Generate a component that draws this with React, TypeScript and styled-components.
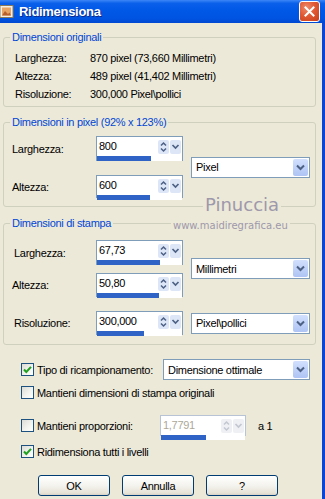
import styled, { createGlobalStyle } from "styled-components";

const GlobalStyle = createGlobalStyle`
  html, body {
    margin: 0;
    padding: 0;
    background: #ece9d8;
  }
  body {
    font-family: "Liberation Sans", Tahoma, Arial, sans-serif;
    font-size: 11px;
    letter-spacing: -0.3px;
    color: #000;
  }
`;

const Window = styled.div`
  width: 325px;
  height: 499px;
  display: flex;
  flex-direction: column;
  background: #ece9d8;
  overflow: hidden;
`;

const TitleBar = styled.div`
  height: 23px;
  flex-shrink: 0;
  display: flex;
  align-items: center;
  padding-right: 5px;
  background: linear-gradient(
    to bottom,
    #3c86f6 0%,
    #0b60ea 14%,
    #0058e6 45%,
    #0054e2 80%,
    #0048d2 100%
  );
`;

const Title = styled.span`
  font-weight: bold;
  font-size: 13px;
  color: #fff;
  margin-left: 5px;
  text-shadow: 1px 1px 0 #0c2a8c;
`;

const CloseButton = styled.div`
  margin-left: auto;
  width: 19px;
  height: 19px;
  border: 1px solid #fff;
  border-radius: 3px;
  background: radial-gradient(circle at 35% 30%, #ef8a6c 0%, #e05a35 45%, #c93e18 100%);
  display: flex;
  align-items: center;
  justify-content: center;
`;

const Body = styled.div`
  position: relative;
  flex: 1;
  display: flex;
  flex-direction: column;
  border-right: 3px solid #0a45d3;
  padding-top: 8px;
`;

const Group = styled.fieldset<{ $top?: number; $pt?: number; $pb?: number }>`
  margin: ${(p) => p.$top ?? 0}px 6px 0 3px;
  padding: ${(p) => p.$pt ?? 0}px 4px ${(p) => p.$pb ?? 0}px 8px;
  border: 1px solid #d0d0bf;
  border-radius: 3px;
  min-width: 0;
`;

const Legend = styled.legend`
  color: #0046d5;
  padding: 0 2px;
  margin-left: -2px;
  line-height: 13px;
`;

const InfoGrid = styled.div`
  display: grid;
  grid-template-columns: 75px 1fr;
  grid-auto-rows: 18px;
  align-items: center;
  padding-left: 3px;
`;

const PairGrid = styled.div<{ $gap: number }>`
  display: grid;
  grid-template-columns: 76px 87px 119px;
  column-gap: 8px;
  row-gap: ${(p) => p.$gap}px;
  align-items: center;
`;

const SingleRow = styled.div<{ $top: number }>`
  display: grid;
  grid-template-columns: 76px 87px 119px;
  column-gap: 8px;
  align-items: center;
  margin-top: ${(p) => p.$top}px;
`;

const FieldLabel = styled.span<{ $indent?: number }>`
  padding-left: ${(p) => p.$indent ?? 0}px;
  white-space: nowrap;
`;

const SpanCell = styled.div`
  grid-column: 3;
  grid-row: 1 / span 2;
`;

const SpinFrame = styled.div<{ $h: number; $w: number; $disabled?: boolean }>`
  box-sizing: border-box;
  width: ${(p) => p.$w}px;
  height: ${(p) => p.$h}px;
  border: 1px solid ${(p) => (p.$disabled ? "#b8c4d6" : "#7f9db9")};
  background: #fff;
  display: grid;
  grid-template-columns: 1fr auto;
  grid-template-rows: 1fr 5px;
  color: ${(p) => (p.$disabled ? "#aca899" : "#000")};
`;

const SpinText = styled.span`
  padding: 3px 0 0 2px;
  line-height: 13px;
`;

const SpinArrows = styled.div`
  padding: 3px 1px 0 0;
`;

const BarTrack = styled.div`
  grid-column: 1 / span 2;
  background: #fff;
`;

const BarFill = styled.div`
  height: 100%;
  background: #3063c6;
`;

const Select = styled.div<{ $w: number }>`
  box-sizing: border-box;
  width: ${(p) => p.$w}px;
  height: 21px;
  border: 1px solid #7f9db9;
  background: #fff;
  display: flex;
  align-items: center;
  padding-left: 4px;
`;

const ComboButton = styled.div`
  margin-left: auto;
  margin-right: 1px;
  width: 15px;
  height: 17px;
  border-radius: 2px;
  background: linear-gradient(to bottom, #d2e0fd 0%, #bccff8 60%, #afc4f4 100%);
  display: flex;
  align-items: center;
  justify-content: center;
`;

const Options = styled.div`
  display: flex;
  flex-direction: column;
  padding: 0 12px 0 21px;
`;

const OptionRow = styled.div<{ $top: number; $h: number }>`
  display: flex;
  align-items: center;
  height: ${(p) => p.$h}px;
  margin-top: ${(p) => p.$top}px;
`;

const Box = styled.div`
  box-sizing: border-box;
  width: 13px;
  height: 13px;
  border: 1px solid #1c5180;
  background: linear-gradient(135deg, #dcdcd7 0%, #f4f4f0 60%, #ffffff 100%);
  margin-right: 3px;
  flex-shrink: 0;
  display: flex;
  align-items: center;
  justify-content: center;
`;

const OptionLabel = styled.span<{ $w?: number }>`
  white-space: nowrap;
  width: ${(p) => (p.$w ? `${p.$w}px` : "auto")};
`;

const RightCell = styled.div`
  margin-left: auto;
`;

const Suffix = styled.span`
  margin-left: 12px;
`;

const ButtonRow = styled.div`
  display: flex;
  gap: 12px;
  padding-left: 38px;
  margin-top: 17px;
`;

const Button = styled.div`
  box-sizing: border-box;
  width: 72px;
  height: 21px;
  border: 1px solid #003c74;
  border-radius: 3px;
  background: linear-gradient(to bottom, #ffffff 0%, #f4f3ee 50%, #e6e3d6 90%, #d6d0c5 100%);
  display: flex;
  align-items: center;
  justify-content: center;
`;

const Watermark = styled.span<{ $top: number; $left: number; $size: number }>`
  position: absolute;
  top: ${(p) => p.$top}px;
  left: ${(p) => p.$left}px;
  font-family: "DejaVu Sans", sans-serif;
  font-size: ${(p) => p.$size}px;
  letter-spacing: 0;
  color: #9e98ab;
  background: #ece9d8;
  padding: 0 2px;
  white-space: nowrap;
`;

const WindowIcon = () => (
  <svg width="14" height="13" viewBox="0 0 14 13">
    <rect x="0" y="0.5" width="13" height="12" fill="#f4efe2" stroke="#8a7a5c" />
    <rect x="2" y="2.5" width="9" height="8" fill="#e8a463" />
    <path d="M2 10.5 L5 6 L8 9 L9.5 7.5 L11 10.5 Z" fill="#b8602c" />
  </svg>
);

const CloseGlyph = () => (
  <svg width="11" height="11" viewBox="0 0 11 11">
    <path d="M1.5 1.5 L9.5 9.5 M9.5 1.5 L1.5 9.5" stroke="#fff" strokeWidth="2" strokeLinecap="square" />
  </svg>
);

const SpinGlyph = ({ disabled }: { disabled?: boolean }) => {
  const bg = disabled ? "#eef0f4" : "#dde6f7";
  const ink = disabled ? "#c3c7d0" : "#4d6185";
  return (
    <svg width="23" height="14" viewBox="0 0 23 14">
      <rect x="0" y="0" width="11" height="14" rx="2" fill={bg} />
      <rect x="12" y="0" width="11" height="14" rx="2" fill={bg} />
      <path d="M3 5.5 L5.5 3 L8 5.5 M3 8.5 L5.5 11 L8 8.5" stroke={ink} strokeWidth="1.5" fill="none" />
      <path d="M14.5 5 L17.5 8 L20.5 5" stroke={ink} strokeWidth="1.7" fill="none" />
    </svg>
  );
};

const ComboGlyph = () => (
  <svg width="9" height="7" viewBox="0 0 9 7">
    <path d="M1 1.5 L4.5 5 L8 1.5" stroke="#4d6185" strokeWidth="2" fill="none" />
  </svg>
);

const CheckGlyph = () => (
  <svg width="9" height="9" viewBox="0 0 9 9">
    <path d="M1 4.5 L3.3 7 L8 1.8" stroke="#21a121" strokeWidth="2" fill="none" />
  </svg>
);

type SpinProps = {
  value: string;
  fill: number;
  h?: number;
  w?: number;
  disabled?: boolean;
};

const SpinBox = ({ value, fill, h = 25, w = 87, disabled }: SpinProps) => (
  <SpinFrame $h={h} $w={w} $disabled={disabled}>
    <SpinText>{value}</SpinText>
    <SpinArrows>
      <SpinGlyph disabled={disabled} />
    </SpinArrows>
    <BarTrack>
      <BarFill style={{ width: `${fill}%` }} />
    </BarTrack>
  </SpinFrame>
);

const Dropdown = ({ label, w = 119 }: { label: string; w?: number }) => (
  <Select $w={w}>
    <span>{label}</span>
    <ComboButton>
      <ComboGlyph />
    </ComboButton>
  </Select>
);

const Check = ({ checked }: { checked?: boolean }) => <Box>{checked && <CheckGlyph />}</Box>;

const App = () => (
  <Window>
    <GlobalStyle />
    <TitleBar>
      <WindowIcon />
      <Title>Ridimensiona</Title>
      <CloseButton>
        <CloseGlyph />
      </CloseButton>
    </TitleBar>
    <Body>
      <Group $pt={5} $pb={3}>
        <Legend>Dimensioni originali</Legend>
        <InfoGrid>
          <span>Larghezza:</span>
          <span>870 pixel (73,660 Millimetri)</span>
          <span>Altezza:</span>
          <span>489 pixel (41,402 Millimetri)</span>
          <span>Risoluzione:</span>
          <span>300,000 Pixel\pollici</span>
        </InfoGrid>
      </Group>

      <Group $top={9} $pt={7} $pb={8}>
        <Legend>Dimensioni in pixel (92% x 123%)</Legend>
        <PairGrid $gap={14}>
          <FieldLabel>Larghezza:</FieldLabel>
          <SpinBox value="800" fill={64} />
          <SpanCell>
            <Dropdown label="Pixel" />
          </SpanCell>
          <FieldLabel>Altezza:</FieldLabel>
          <SpinBox value="600" fill={62} h={23} />
        </PairGrid>
      </Group>

      <Group $top={10} $pt={10} $pb={9}>
        <Legend>Dimensioni di stampa</Legend>
        <PairGrid $gap={8}>
          <FieldLabel $indent={2}>Larghezza:</FieldLabel>
          <SpinBox value="67,73" fill={74} />
          <SpanCell>
            <Dropdown label="Millimetri" />
          </SpanCell>
          <FieldLabel>Altezza:</FieldLabel>
          <SpinBox value="50,80" fill={73} h={24} />
        </PairGrid>
        <SingleRow $top={14}>
          <FieldLabel $indent={2}>Risoluzione:</FieldLabel>
          <SpinBox value="300,000" fill={55} h={24} />
          <Dropdown label="Pixel\pollici" />
        </SingleRow>
      </Group>

      <Options>
        <OptionRow $top={14} $h={21}>
          <Check checked />
          <OptionLabel>Tipo di ricampionamento:</OptionLabel>
          <RightCell>
            <Dropdown label="Dimensione ottimale" w={147} />
          </RightCell>
        </OptionRow>
        <OptionRow $top={6} $h={13}>
          <Check />
          <OptionLabel>Mantieni dimensioni di stampa originali</OptionLabel>
        </OptionRow>
        <OptionRow $top={16} $h={21}>
          <Check />
          <OptionLabel $w={123}>Mantieni proporzioni:</OptionLabel>
          <SpinBox value="1,7791" fill={53} h={21} w={86} disabled />
          <Suffix>a 1</Suffix>
        </OptionRow>
        <OptionRow $top={9} $h={13}>
          <Check checked />
          <OptionLabel>Ridimensiona tutti i livelli</OptionLabel>
        </OptionRow>
      </Options>

      <ButtonRow>
        <Button>OK</Button>
        <Button>Annulla</Button>
        <Button>?</Button>
      </ButtonRow>

      <Watermark $top={171} $left={203} $size={18}>
        Pinuccia
      </Watermark>
      <Watermark $top={197} $left={171} $size={10}>
        www.maidiregrafica.eu
      </Watermark>
    </Body>
  </Window>
);

export default App;
